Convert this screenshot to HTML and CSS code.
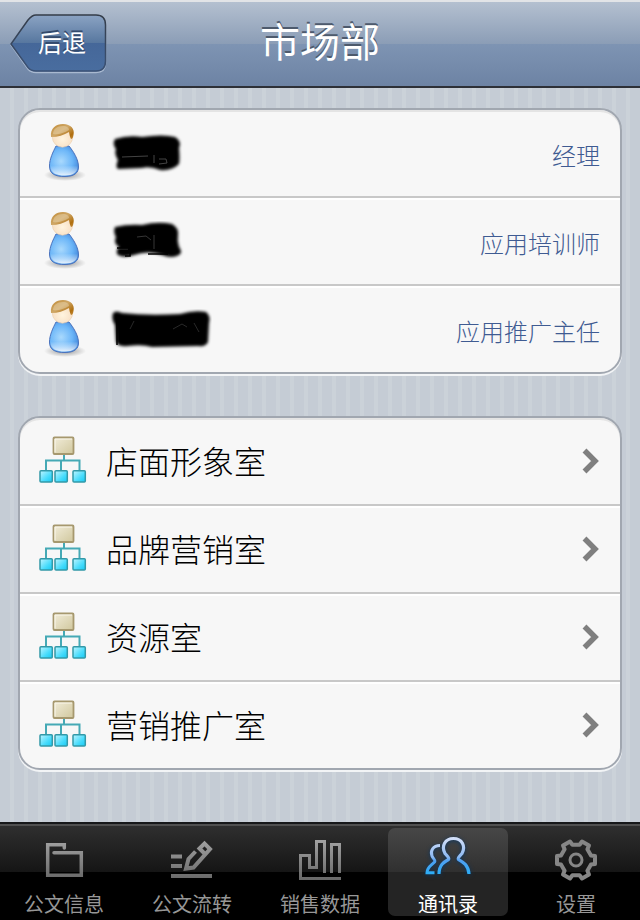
FILE: index.html
```html
<!DOCTYPE html>
<html lang="zh-CN">
<head>
<meta charset="UTF-8">
<meta name="viewport" content="width=device-width, initial-scale=1">
<title>市场部</title>
<link rel="stylesheet" href="styles.css">
</head>
<body>
<!-- shared icons and gradients -->
<svg class="defs" width="0" height="0" aria-hidden="true">
    <defs>
        <linearGradient id="backFill" x1="0" y1="0" x2="0" y2="1">
            <stop offset="0" stop-color="#8ba3c3"/>
            <stop offset="0.5" stop-color="#57779f"/>
            <stop offset="0.5" stop-color="#456799"/>
            <stop offset="1" stop-color="#496d9f"/>
        </linearGradient>
        <linearGradient id="backLine" x1="0" y1="0" x2="0" y2="1">
            <stop offset="0" stop-color="#343c48"/>
            <stop offset="1" stop-color="#3b5276"/>
        </linearGradient>
        <linearGradient id="grey" gradientUnits="userSpaceOnUse" x1="0" y1="4" x2="0" y2="44">
            <stop offset="0" stop-color="#a2a2a2"/>
            <stop offset="1" stop-color="#686868"/>
        </linearGradient>
        <linearGradient id="blue" gradientUnits="userSpaceOnUse" x1="0" y1="2" x2="0" y2="40">
            <stop offset="0" stop-color="#d3dff8"/>
            <stop offset="0.5" stop-color="#8db9f2"/>
            <stop offset="0.6" stop-color="#4f9ff0"/>
            <stop offset="1" stop-color="#27b0f8"/>
        </linearGradient>
        <linearGradient id="hair" x1="0" y1="0" x2="1" y2="1">
            <stop offset="0" stop-color="#c08a35"/>
            <stop offset="0.45" stop-color="#cfa766"/>
            <stop offset="0.8" stop-color="#b06f0f"/>
            <stop offset="1" stop-color="#c48b3c"/>
        </linearGradient>
        <radialGradient id="face" cx="0.5" cy="0.6" r="0.6">
            <stop offset="0" stop-color="#fff4df"/>
            <stop offset="1" stop-color="#f6dcc0"/>
        </radialGradient>
        <radialGradient id="shirt" cx="0.4" cy="0.5" r="0.6">
            <stop offset="0" stop-color="#a9d9fd"/>
            <stop offset="0.65" stop-color="#6cb6f8"/>
            <stop offset="1" stop-color="#4a90e0"/>
        </radialGradient>
        <linearGradient id="shine" x1="0" y1="0" x2="0" y2="1">
            <stop offset="0.65" stop-color="#fff" stop-opacity="0"/>
            <stop offset="1" stop-color="#fff" stop-opacity="0.85"/>
        </linearGradient>
        <radialGradient id="shadow">
            <stop offset="0" stop-color="#000" stop-opacity="0.4"/>
            <stop offset="1" stop-color="#000" stop-opacity="0"/>
        </radialGradient>
        <linearGradient id="sand" x1="0" y1="0" x2="1" y2="1">
            <stop offset="0" stop-color="#f2edda"/>
            <stop offset="1" stop-color="#d0c79d"/>
        </linearGradient>
        <linearGradient id="cyan" x1="0" y1="0" x2="1" y2="1">
            <stop offset="0" stop-color="#c2f5ff"/>
            <stop offset="0.6" stop-color="#48dcfc"/>
            <stop offset="1" stop-color="#16c8f2"/>
        </linearGradient>
        <filter id="soft" x="-10%" y="-20%" width="120%" height="140%">
            <feGaussianBlur stdDeviation="1.5"/>
        </filter>
    </defs>
    <symbol id="person" viewBox="0 0 50 64">
        <ellipse cx="27" cy="57" rx="21" ry="6" fill="url(#shadow)"/>
        <path d="M18 28 C15 34 11.500 41 11.500 48 C11.500 56 17 58.500 27 58.500 C36 58.500 40.500 55 40.500 49 C40.500 41 35 33 31 28 Z" fill="url(#shirt)" stroke="#4a72bd"/>
        <path d="M18 29 C15 35 12.500 41 12.500 48 C12.500 55 18 57.500 27 57.500 C35 57.500 39.500 54 39.500 49 C39.500 41 35 34 31 29 Z" fill="url(#shine)"/>
        <circle cx="24.500" cy="19" r="10.200" fill="url(#face)" stroke="#eccfac" stroke-width="0.600"/>
        <path d="M13 19 C12 10 18 6 25 6 C33 6 37 11 35.500 17 C35 20 34 21 33 21 C32 19 31.500 17 31 14 C26 17 20 19 13 19 Z" fill="url(#hair)"/>
        <path d="M15 16 C15 11 19 8 25 8 C29 8 31 10 31 12 C26 15 20 17 15 16 Z" fill="#ecd9b5" opacity="0.450"/>
    </symbol>
    <symbol id="org" viewBox="0 0 50 52">
        <path d="M26 20 V26 M8 37 V26.500 H41.500 V37 M23 27 V37" fill="none" stroke="#45a9b5" stroke-width="2"/>
        <rect x="15.500" y="3.500" width="20" height="16.500" rx="1" fill="url(#sand)" stroke="#a6986e" stroke-width="1.800"/>
        <path d="M17 18.500 V5 H34" fill="none" stroke="#fbf8ec"/>
        <g fill="url(#cyan)" stroke="#3399a8" stroke-width="1.500">
            <rect x="2" y="36.700" width="12.300" height="11.300" rx="1"/>
            <rect x="17" y="36.700" width="12.300" height="11.300" rx="1"/>
            <rect x="35" y="36.700" width="12.300" height="11.300" rx="1"/>
        </g>
    </symbol>
    <symbol id="chevron" viewBox="0 0 18 28">
        <path d="M2.500 3.500 L13 14 L2.500 24.500" fill="none" stroke="#7f7f7f" stroke-width="5.500"/>
    </symbol>
</svg>

<header class="navbar">
    <button type="button" class="back">
        <svg class="back-shape" viewBox="0 0 98 60" aria-hidden="true">
            <path d="M26 2.500 H86 Q95.500 2.500 95.500 12 V49 Q95.500 58.500 86 58.500 H26 Q21 58.500 18 55 L1 31 L18 7 Q22 2.500 26 2.500 Z" fill="none" stroke="#a9b9d0" stroke-width="1.500"/>
            <path d="M26 1 H86 Q95.500 1 95.500 11 V47 Q95.500 57 86 57 H26 Q21 57 18 53.500 L1 30 L18 6 Q22 1 26 1 Z" fill="url(#backFill)" stroke="url(#backLine)" stroke-width="1.500"/>
        </svg>
        <span class="back-text">后退</span>
    </button>
    <h1 class="title">市场部</h1>
</header>

<main class="content">
    <ul class="group">
        <li class="row">
            <svg class="person" aria-hidden="true"><use href="#person"/></svg>
            <svg class="name" viewBox="0 0 104 44" role="img" aria-label="姓名">
                <path filter="url(#soft)" d="M7 6 Q20 2 34 4 Q55 1 67 4 Q74 8 71 15 Q72 26 71 31 Q64 38 52 37 Q42 33 34 35 L10 36 Q7 34 10 27 Q6 21 8 16 Q4 11 7 6 Z"/>
                <path d="M46 22 V30 M51 26 L58 26 L59 30 L51 31 M14 24 L40 23" fill="none" stroke="#555" stroke-width="0.800"/>
            </svg>
            <span class="job">经理</span>
        </li>
        <li class="row">
            <svg class="person" aria-hidden="true"><use href="#person"/></svg>
            <svg class="name" viewBox="0 0 104 44" role="img" aria-label="姓名">
                <path filter="url(#soft)" d="M7 6 Q20 3 34 4 Q50 0 64 3 Q71 7 70 14 Q69 20 71 26 Q75 31 71 34 Q64 38 54 34 Q40 29 26 34 Q14 38 9 33 Q8 29 11 26 Q5 22 8 16 Q5 11 7 6 Z"/>
                <path d="M29 16 L38 15 L43 19 M10 28 H20 M46 14 V28" fill="none" stroke="#444" stroke-width="0.800"/>
                <path d="M9 27 H20 M17 35 H22 V28 M40 33 H60" fill="none" stroke="#000" stroke-width="1.500"/>
            </svg>
            <span class="job">应用培训师</span>
        </li>
        <li class="row">
            <svg class="person" aria-hidden="true"><use href="#person"/></svg>
            <svg class="name" viewBox="0 0 104 44" role="img" aria-label="姓名">
                <path filter="url(#soft)" d="M5 4 Q8 1 14 4 Q40 7 72 5 Q86 1 98 3 Q103 7 101 14 L100 33 Q98 38 90 37 L44 38 Q34 35 20 37 Q8 38 8 32 L7 16 Q3 10 5 4 Z"/>
                <path d="M9 10 V36" fill="none" stroke="#000" stroke-width="1.500"/>
                <path d="M65 20 L74 15 L79 18 M86 14 L91 23 M22 20 L26 12" fill="none" stroke="#333" stroke-width="0.800"/>
            </svg>
            <span class="job">应用推广主任</span>
        </li>
    </ul>

    <ul class="group">
        <li class="row">
            <a class="dept" href="#">
                <svg class="org" aria-hidden="true"><use href="#org"/></svg>
                <span class="dept-name">店面形象室</span>
                <svg class="chevron" aria-hidden="true"><use href="#chevron"/></svg>
            </a>
        </li>
        <li class="row">
            <a class="dept" href="#">
                <svg class="org" aria-hidden="true"><use href="#org"/></svg>
                <span class="dept-name">品牌营销室</span>
                <svg class="chevron" aria-hidden="true"><use href="#chevron"/></svg>
            </a>
        </li>
        <li class="row">
            <a class="dept" href="#">
                <svg class="org" aria-hidden="true"><use href="#org"/></svg>
                <span class="dept-name">资源室</span>
                <svg class="chevron" aria-hidden="true"><use href="#chevron"/></svg>
            </a>
        </li>
        <li class="row">
            <a class="dept" href="#">
                <svg class="org" aria-hidden="true"><use href="#org"/></svg>
                <span class="dept-name">营销推广室</span>
                <svg class="chevron" aria-hidden="true"><use href="#chevron"/></svg>
            </a>
        </li>
    </ul>
</main>

<nav class="tabbar">
    <a class="tab" href="#">
        <svg class="tab-icon" viewBox="0 0 48 48" aria-hidden="true">
            <path d="M24.300 12 V8.700 H7.700 V39.300 H41.300 V16.700 H14" stroke-width="3.500" stroke-linecap="round"/>
        </svg>
        <span>公文信息</span>
    </a>
    <a class="tab" href="#">
        <svg class="tab-icon" viewBox="0 0 48 48" aria-hidden="true">
            <path d="M3 20.500 H14 M3 30 H14 M3 40 H44" stroke-width="4"/>
            <path d="M27.500 15.500 L20.500 23 L18 32.500 L25.500 31.500 L42 13 L36.500 7.500 L31.500 12.500 L37 18" stroke-width="4"/>
        </svg>
        <span>公文流转</span>
    </a>
    <a class="tab" href="#">
        <svg class="tab-icon" viewBox="0 0 48 48" aria-hidden="true">
            <path d="M45 42.500 H4.500 V19.500 H13.500 V31.500 H20.500 V5.500 H28.500 V37 M35.500 37 V8.500 H43.500 V37" stroke-width="3"/>
        </svg>
        <span>销售数据</span>
    </a>
    <a class="tab active" href="#" aria-current="page">
        <svg class="tab-icon" viewBox="0 0 48 48" aria-hidden="true">
            <path d="M16 9.500 C9 9.500 6 15 8 20 C9 23 12 24 10.500 26 C8 29 3 31 3 36.700 H10.500" stroke-width="3"/>
            <path d="M15 38 C15 29 20 26 24.500 23.500 C26 22 23 20 21 17.500 C17 10 21 2.500 29.500 2.500 C38 2.500 42 10 38 17.500 C36 20 33 22 34.500 23.500 C39 26 44.500 29 45 38" stroke-width="3.200"/>
        </svg>
        <span>通讯录</span>
    </a>
    <a class="tab" href="#">
        <svg class="tab-icon" viewBox="-24 -24 48 48" aria-hidden="true">
            <g class="gear">
                <path d="M15 -4.500 L19 -4 V4 L15 4.500 L11.400 10.700 L13 14.500 L6 18.500 L3.600 15.200 H-3.600 L-6 18.500 L-13 14.500 L-11.400 10.700 L-15 4.500 L-19 4 V-4 L-15 -4.500 L-11.400 -10.700 L-13 -14.500 L-6 -18.500 L-3.600 -15.200 H3.600 L6 -18.500 L13 -14.500 L11.400 -10.700 Z" stroke-width="4" stroke-linejoin="round"/>
                <circle r="6" stroke-width="3"/>
            </g>
        </svg>
        <span>设置</span>
    </a>
</nav>
</body>
</html>
```
FILE: styles.css
```css
* { box-sizing: border-box; }
body {
    margin: 0;
    min-height: 100vh;
    display: flex;
    flex-direction: column;
    font-family: "Noto Sans CJK SC", sans-serif;
    font-weight: 300;
    background: #c5ccd5 repeating-linear-gradient(90deg, #c5ccd5 0, #c5ccd5 10px, #cbd2d9 10px, #cbd2d9 14px);
}
ul { list-style: none; margin: 0; padding: 0; }
a { color: inherit; text-decoration: none; }
.defs { position: absolute; }

/* top bar */
.navbar {
    display: grid;
    grid-template-columns: 1fr auto 1fr;
    align-items: center;
    height: 88px;
    padding: 0 10px;
    border-top: 2px solid #e2e4e7;
    border-bottom: 2px solid #2d3037;
    background: linear-gradient(#b4c0d0, #8b9db6 50%, #7e94b3 50%, #6d83a4);
}
.back {
    position: relative;
    width: 98px;
    height: 60px;
    padding: 0 0 6px 6px;
    border: none;
    background: none;
    color: #fff;
    font: inherit;
    font-size: 24px;
    font-weight: 400;
    cursor: pointer;
}
.back-shape { position: absolute; top: 0; left: 0; width: 100%; height: 100%; }
.back-text { position: relative; text-shadow: 0 -2px 0 #344a6c; }
.title {
    margin: 0;
    padding-bottom: 8px;
    color: #fff;
    font-size: 40px;
    font-weight: 400;
    line-height: 48px;
    text-shadow: 0 -2px 0 #4d5a6d;
}

/* grouped lists */
.content {
    flex: 1;
    display: flex;
    flex-direction: column;
    gap: 42px;
    padding: 20px 18px;
}
.group {
    border: 2px solid #a1a7b0;
    border-radius: 22px;
    background: #f7f7f7;
    box-shadow: inset 0 2px 0 #e4e4e4, 0 2px 0 #f2f4f6;
}
.row {
    display: flex;
    align-items: center;
    min-height: 88px;
    padding: 0 20px 0 18px;
    border-bottom: 2px solid #c8c8c8;
}
.row + .row { box-shadow: inset 0 2px 0 #fff; }
.row:last-child { min-height: 86px; border-bottom: none; border-radius: 0 0 20px 20px; }
.person { width: 50px; height: 64px; margin-bottom: 6px; }
.name { width: 104px; height: 44px; margin: 4px 0 0 20px; }
.job {
    margin-left: auto;
    padding-top: 4px;
    color: #3f5b92;
    font-size: 24px;
    line-height: 32px;
}
.dept { flex: 1; display: flex; align-items: center; }
.org { width: 50px; height: 52px; margin-bottom: 2px; }
.dept-name {
    flex: 1;
    margin-left: 18px;
    padding-bottom: 2px;
    color: #000;
    font-size: 32px;
    line-height: 40px;
}
.chevron { width: 18px; height: 28px; }

/* bottom tabs */
.tabbar {
    display: flex;
    padding: 4px 0;
    border-top: 2px solid #17181a;
    background: linear-gradient(#303030, #151515 48px, #000 48px);
    box-shadow: inset 0 2px 0 #505050;
}
.tab {
    flex: 1;
    display: flex;
    flex-direction: column;
    align-items: center;
    gap: 8px;
    height: 88px;
    margin: 0 4px;
    padding-top: 8px;
    border-radius: 7px;
    color: #979797;
    font-size: 20px;
    font-weight: 400;
    line-height: 24px;
}
.tab-icon { width: 48px; height: 48px; fill: none; stroke: url(#grey); overflow: visible; }
.gear { stroke: #868686; }
.active {
    color: #fff;
    background: linear-gradient(#474747, #303030 44px, #242424 44px);
}
.active .tab-icon { stroke: url(#blue); filter: drop-shadow(0 1px 2px #0a3560); }
```
